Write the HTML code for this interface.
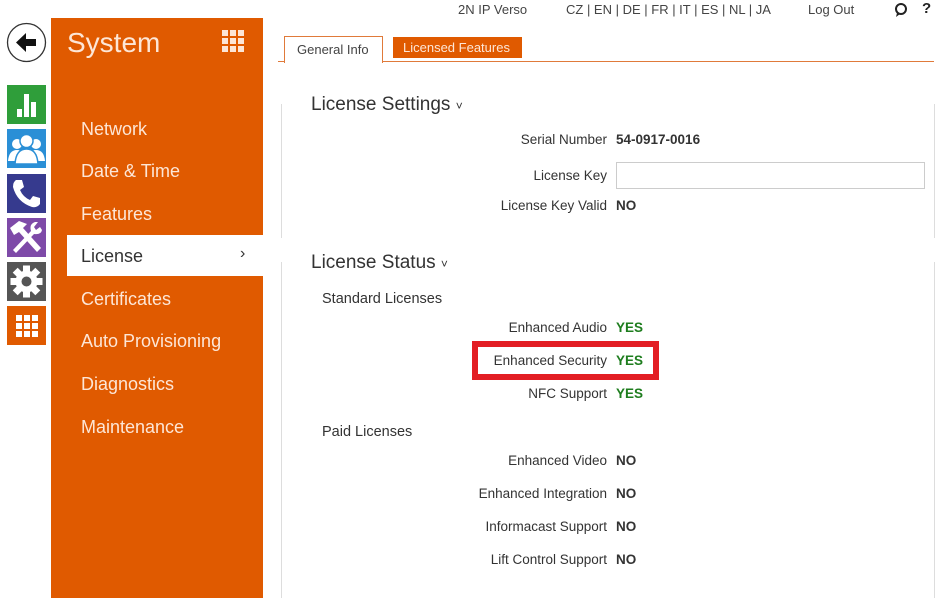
<!DOCTYPE html>
<html><head><meta charset="utf-8"><style>
*{margin:0;padding:0;box-sizing:border-box}
body{width:939px;height:598px;overflow:hidden;background:#fff;font-family:"Liberation Sans",sans-serif;color:#333;position:relative}
.a{position:absolute;white-space:nowrap}
.side{position:absolute;left:51px;top:18px;width:212px;height:580px;background:#e05a00}
.nav{position:absolute;left:81px;color:#fde6d6;font-size:18px}
.ic{position:absolute;left:7px;width:39px;height:39px}
.lbl{position:absolute;right:332px;font-size:13.5px;color:#333;text-align:right}
.val{position:absolute;left:616px;font-size:13.5px;font-weight:bold;color:#333}
.yes{color:#1e7d1e}
.box{position:absolute;left:281px;width:654px;border-left:1px solid #ddd;border-right:1px solid #ddd}
.h{position:absolute;left:311px;font-size:19px;color:#333}
</style></head><body>
<div class="a" style="left:458px;top:2px;font-size:13px;color:#444">2N IP Verso</div>
<div class="a" style="left:566px;top:2px;font-size:13px;color:#444">CZ | EN | DE | FR | IT | ES | NL | JA</div>
<div class="a" style="left:808px;top:2px;font-size:13px;color:#444">Log Out</div>
<svg class="a" style="left:894px;top:3px" width="14" height="14"><circle cx="7" cy="6" r="5" fill="none" stroke="#222" stroke-width="2"/><path d="M3 10 L2 14 L6 11" fill="#222"/></svg>
<div class="a" style="left:922px;top:0px;font-size:15px;font-weight:bold;color:#222">?</div>

<svg class="a" style="left:6px;top:22px" width="41" height="41"><circle cx="20.5" cy="20.5" r="19" fill="#fff" stroke="#333" stroke-width="1.3"/><path d="M10 20.5 L20 11 L20 17 L30 17 L30 24 L20 24 L20 30 Z" fill="#111"/></svg>
<div class="ic" style="top:85px;background:#2f9e3a"><svg width="39" height="39"><g fill="#fff"><rect x="10" y="24" width="5" height="8"/><rect x="17" y="9" width="5" height="23"/><rect x="24" y="17" width="5" height="15"/></g></svg></div>
<div class="ic" style="top:129px;background:#2a8fd6"><svg width="39" height="39"><g fill="#fff"><circle cx="10" cy="15" r="5"/><circle cx="29" cy="15" r="5"/><path d="M1 32 Q2 21 10 21 Q18 21 19 32 Z"/><path d="M20 32 Q21 21 29 21 Q37 21 38 32 Z"/><circle cx="19.5" cy="12" r="6.5" stroke="#2a8fd6" stroke-width="1.5"/><path d="M8 35 Q9 20 19.5 20 Q30 20 31 35 Z" stroke="#2a8fd6" stroke-width="1.5"/></g></svg></div>
<div class="ic" style="top:174px;background:#363a8e"><svg width="39" height="39"><path d="M9 6 L15 6 L17 13 L13 16 Q16 23 23 26 L26 22 L33 24 L33 30 Q30 34 25 33 Q10 28 6 13 Q6 8 9 6 Z" fill="#fff"/></svg></div>
<div class="ic" style="top:218px;background:#7e4aa8"><svg width="39" height="39"><g fill="#fff"><path d="M3 10 L12 3 L20 6 L16 10 L34 30 L30 34 L12 14 L7 17 Z"/><path d="M6 32 L24 13 Q22 6 28 4 L31 4 L27 9 L29 12 L33 9 L35 12 Q34 17 27 16 L9 35 Z"/></g></svg></div>
<div class="ic" style="top:262px;background:#555"><svg width="39" height="39"><g fill="#fff" transform="translate(19.5 19.5)"><circle r="11"/><rect x="-3.5" y="-16" width="7" height="32"/><rect x="-3.5" y="-16" width="7" height="32" transform="rotate(45)"/><rect x="-3.5" y="-16" width="7" height="32" transform="rotate(90)"/><rect x="-3.5" y="-16" width="7" height="32" transform="rotate(135)"/><circle r="5" fill="#555"/></g></svg></div>
<div class="ic" style="top:306px;background:#e05a00"><svg width="39" height="39"><g fill="#fff"><rect x="9" y="9" width="6" height="6"/><rect x="17" y="9" width="6" height="6"/><rect x="25" y="9" width="6" height="6"/><rect x="9" y="17" width="6" height="6"/><rect x="17" y="17" width="6" height="6"/><rect x="25" y="17" width="6" height="6"/><rect x="9" y="25" width="6" height="6"/><rect x="17" y="25" width="6" height="6"/><rect x="25" y="25" width="6" height="6"/></g></svg></div>

<div class="side"></div>
<div class="a" style="left:67px;top:27px;font-size:28px;color:#fde6d6">System</div>
<svg class="a" style="left:222px;top:30px" width="22" height="22"><g fill="#fde6d6"><rect x="0" y="0" width="6" height="6"/><rect x="8" y="0" width="6" height="6"/><rect x="16" y="0" width="6" height="6"/><rect x="0" y="8" width="6" height="6"/><rect x="8" y="8" width="6" height="6"/><rect x="16" y="8" width="6" height="6"/><rect x="0" y="16" width="6" height="6"/><rect x="8" y="16" width="6" height="6"/><rect x="16" y="16" width="6" height="6"/></g></svg>
<div class="nav" style="top:119px">Network</div>
<div class="nav" style="top:161px">Date &amp; Time</div>
<div class="nav" style="top:204px">Features</div>
<div class="a" style="left:67px;top:235px;width:196px;height:41px;background:#fff"></div>
<div class="nav" style="top:246px;color:#333">License</div>
<div class="a" style="left:240px;top:245px;font-size:16px;color:#333">&#8250;</div>
<div class="nav" style="top:289px">Certificates</div>
<div class="nav" style="top:331px">Auto Provisioning</div>
<div class="nav" style="top:374px">Diagnostics</div>
<div class="nav" style="top:417px">Maintenance</div>

<div class="a" style="left:278px;top:61px;width:656px;border-top:1px solid #e07a3a"></div>
<div class="a" style="left:284px;top:36px;width:99px;height:27px;background:#fff;border:1px solid #e07a3a;border-bottom:none;font-size:13px;color:#444;padding:5px 0 0 12px">General Info</div>
<div class="a" style="left:393px;top:37px;width:129px;height:21px;background:#e05a00;color:#fde6d6;font-size:13px;padding:3px 0 0 10px">Licensed Features</div>

<div class="box" style="top:104px;height:134px"></div>
<div class="h" style="top:94px;background:#fff;padding-right:4px">License Settings <span style="font-size:12px">&#709;</span></div>
<div class="lbl" style="top:132px">Serial Number</div><div class="val" style="top:132px">54-0917-0016</div>
<div class="lbl" style="top:168px">License Key</div>
<div class="a" style="left:616px;top:162px;width:309px;height:27px;border:1px solid #ccc"></div>
<div class="lbl" style="top:198px">License Key Valid</div><div class="val" style="top:198px">NO</div>

<div class="box" style="top:262px;height:336px"></div>
<div class="h" style="top:252px;background:#fff;padding-right:4px">License Status <span style="font-size:12px">&#709;</span></div>
<div class="a" style="left:322px;top:291px;font-size:14.5px">Standard Licenses</div>
<div class="lbl" style="top:320px">Enhanced Audio</div><div class="val yes" style="top:320px">YES</div>
<div class="a" style="left:472px;top:341px;width:187px;height:39px;border:6px solid #e31e24"></div>
<div class="lbl" style="top:353px">Enhanced Security</div><div class="val yes" style="top:353px">YES</div>
<div class="lbl" style="top:386px">NFC Support</div><div class="val yes" style="top:386px">YES</div>
<div class="a" style="left:322px;top:424px;font-size:14.5px">Paid Licenses</div>
<div class="lbl" style="top:453px">Enhanced Video</div><div class="val" style="top:453px">NO</div>
<div class="lbl" style="top:486px">Enhanced Integration</div><div class="val" style="top:486px">NO</div>
<div class="lbl" style="top:519px">Informacast Support</div><div class="val" style="top:519px">NO</div>
<div class="lbl" style="top:552px">Lift Control Support</div><div class="val" style="top:552px">NO</div>
</body></html>
